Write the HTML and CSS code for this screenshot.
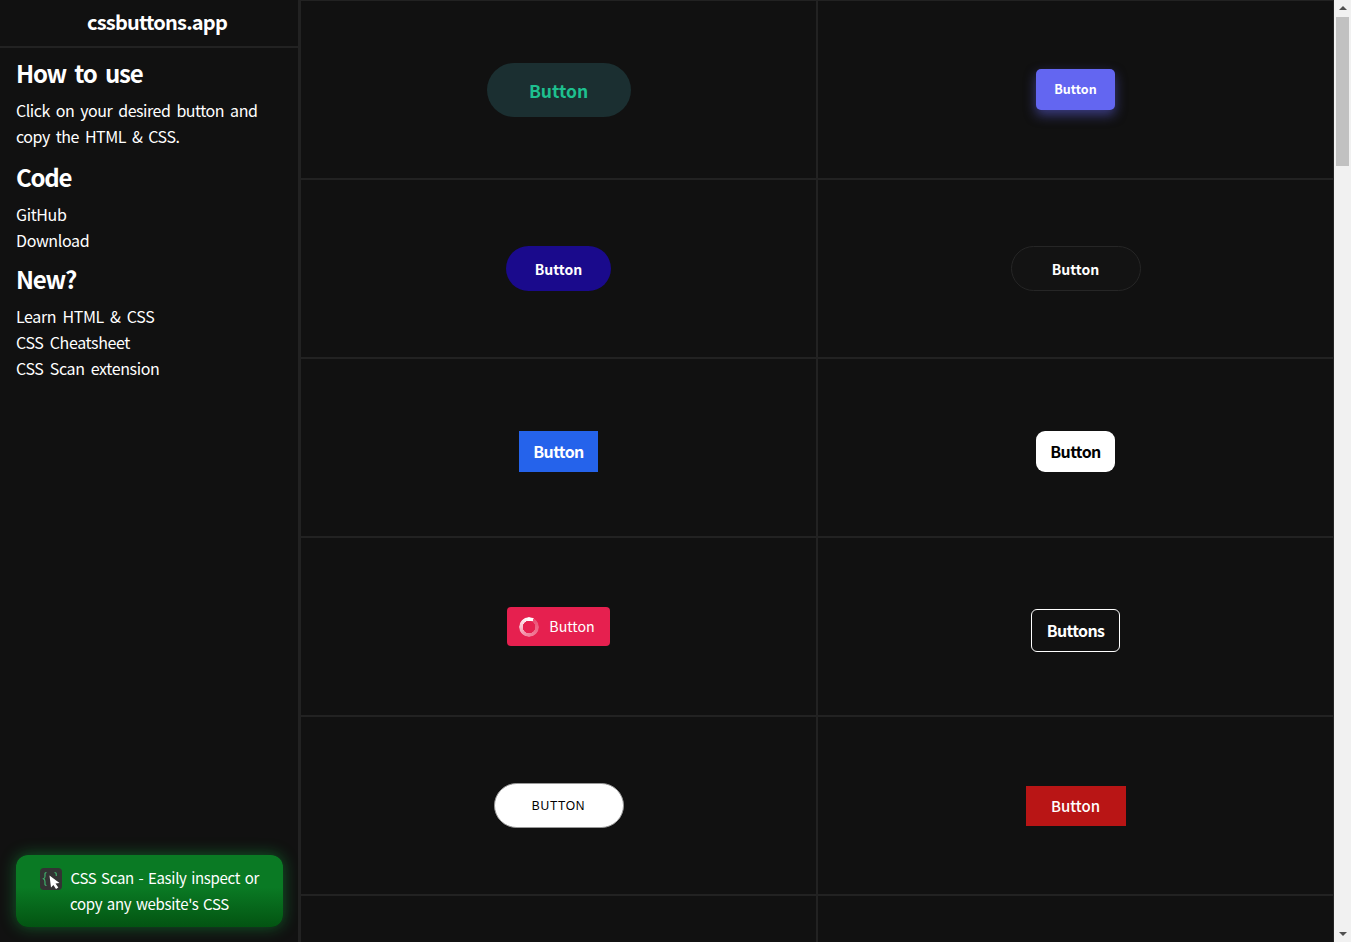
FILE: index.html
```html
<!DOCTYPE html>
<html lang="en">
<head>
<meta charset="utf-8">
<title>cssbuttons.app</title>
<link rel="stylesheet" href="styles.css">
</head>
<body>
<div class="page">
  <aside class="sidebar">
    <header class="brand">cssbuttons.app</header>
    <div class="nav">
      <h2>How to use</h2>
      <p>Click on your desired button and copy the HTML &amp; CSS.</p>
      <h2>Code</h2>
      <ul>
        <li><a href="#">GitHub</a></li>
        <li><a href="#">Download</a></li>
      </ul>
      <h2>New?</h2>
      <ul>
        <li><a href="#">Learn HTML &amp; CSS</a></li>
        <li><a href="#">CSS Cheatsheet</a></li>
        <li><a href="#">CSS Scan extension</a></li>
      </ul>
    </div>
    <a class="promo" href="#">
      <svg class="promo-icon" viewBox="0 0 22 22" width="22" height="22" aria-hidden="true">
        <rect width="22" height="22" rx="4" fill="#333"/>
        <path d="M6.500 4.500C4.500 4.500 5 6 5 8S5 10 3.500 10.800C5 11.500 5 12 5 14s-.5 3.500 1.500 3.500" fill="none" stroke="#3fae6a" stroke-width="1.200"/>
        <path d="M14.500 4.500c2 0 1.800 1.500 1.800 3.500" fill="none" stroke="#3fae6a" stroke-width="1.200"/>
        <path d="M9.500 7.500 19.500 15l-4 .6 2.800 3.900-2.300 1.500-2.600-4L11 19.500Z" fill="#fff"/>
      </svg>
      CSS Scan - Easily inspect or copy any website's CSS
    </a>
  </aside>
  <main class="grid">
    <div class="cell"><button class="btn btn-mint">Button</button></div>
    <div class="cell"><button class="btn btn-indigo">Button</button></div>
    <div class="cell"><button class="btn btn-navy">Button</button></div>
    <div class="cell"><button class="btn btn-ghost">Button</button></div>
    <div class="cell"><button class="btn btn-blue shifted">Button</button></div>
    <div class="cell"><button class="btn btn-white shifted">Button</button></div>
    <div class="cell"><button class="btn btn-rose"><span class="spinner"></span>Button</button></div>
    <div class="cell"><button class="btn btn-outline shifted">Buttons</button></div>
    <div class="cell"><button class="btn btn-caps">BUTTON</button></div>
    <div class="cell"><button class="btn btn-red">Button</button></div>
    <div class="cell"></div>
    <div class="cell"></div>
  </main>
  <div class="scrollbar" aria-hidden="true">
    <span class="arrow arrow-up"></span>
    <span class="thumb"></span>
    <span class="arrow arrow-down"></span>
  </div>
</div>
</body>
</html>
```
FILE: styles.css
```css
* { box-sizing: border-box; }
html, body { margin: 0; height: 100%; overflow: hidden; }
body {
  background: #111;
  color: #fff;
  font-family: "Noto Sans CJK KR", "Noto Sans", sans-serif;
  font-size: 16px;
}
.page { display: flex; height: 942px; }

.sidebar {
  width: 300px;
  flex: none;
  display: flex;
  flex-direction: column;
  border-right: 2px solid #222;
  padding-bottom: 15px;
}
.brand {
  height: 48px;
  border-bottom: 2px solid #222;
  padding: 6px 0 0 16px;
  text-align: center;
  font-size: 20px;
  font-weight: 700;
  line-height: 32px;
  letter-spacing: -0.8px;
}
.nav { flex: 1; padding: 7px 16px 0; }
.nav h2 { margin: 0; font-size: 24px; font-weight: 700; line-height: 36px; letter-spacing: -1.200px; word-spacing: 4px; }
.nav p { margin: 6px 0 10px; line-height: 26px; letter-spacing: -0.46px; word-spacing: 2.800px; }
.nav ul { list-style: none; margin: 6px 0 8px; padding: 0; }
.nav li { line-height: 26px; letter-spacing: -0.37px; word-spacing: 3px; }
.nav a { color: #fff; text-decoration: none; }

.promo {
  display: block;
  margin: 0 15px 0 16px;
  padding: 10px 16px;
  height: 72px;
  border-radius: 12px;
  background: linear-gradient(#0a7a24 45%, #035412);
  box-shadow: 0 0 16px rgba(20, 190, 70, 0.45);
  color: #fff;
  font-size: 15px;
  line-height: 26px;
  letter-spacing: -0.3px;
  text-align: center;
  text-decoration: none;
  word-spacing: 1.500px;
}
.promo-icon { vertical-align: -6px; margin-right: 4px; }

.grid {
  width: 1034px;
  flex: none;
  display: grid;
  grid-template-columns: 517px 517px;
  grid-auto-rows: 179px;
  overflow: hidden;
}
.cell {
  display: flex;
  align-items: center;
  justify-content: center;
  border: 1px solid #222;
}

.btn {
  display: inline-flex;
  align-items: center;
  justify-content: center;
  border: 0;
  padding: 0;
  font-family: inherit;
  color: #fff;
}
.shifted { margin-top: 8px; }
.btn-mint { width: 144px; height: 54px; margin-top: 1px; border-radius: 27px; background: #1b2f31; color: #1ec08f; font-size: 17.500px; font-weight: 700; }
.btn-indigo { width: 79px; height: 41px; padding-bottom: 2px; border-radius: 5px; background: #6366f1; font-size: 12.500px; font-weight: 700; box-shadow: 0 5px 12px rgba(99, 102, 241, 0.5); }
.btn-navy { width: 105px; height: 45px; border-radius: 23px; background: #1a0a8c; font-size: 14px; font-weight: 700; }
.btn-ghost { width: 130px; height: 45px; border-radius: 23px; background: #131313; border: 1px solid #262626; font-size: 14px; font-weight: 700; }
.btn-blue { width: 79px; height: 41px; padding-bottom: 2px; background: #2563eb; font-size: 16px; font-weight: 700; letter-spacing: -0.65px; }
.btn-white { width: 79px; height: 41px; padding-bottom: 2px; border-radius: 9px; background: #fff; color: #000; font-size: 16px; font-weight: 700; letter-spacing: -0.65px; }
.btn-rose { width: 103px; height: 39px; padding: 0 3px 2px 0; border-radius: 4px; background: #e6204f; font-size: 14.200px; }
.btn-outline { width: 89px; height: 43px; padding-bottom: 2px; border-radius: 6px; background: transparent; border: 1px solid #fff; font-size: 16px; font-weight: 700; letter-spacing: -0.65px; }
.btn-caps { width: 130px; height: 45px; border-radius: 23px; background: #fff; border: 1px solid #999; color: #000; font-family: "Liberation Sans", sans-serif; font-size: 12px; letter-spacing: 0.700px; }
.btn-red { width: 100px; height: 40px; margin-top: 1px; padding-bottom: 2px; background: #b91515; font-size: 15px; font-weight: 500; }

.spinner {
  width: 20px;
  height: 20px;
  margin: 2px 10px 0 0;
  border-radius: 50%;
  background: conic-gradient(from 30deg, rgba(255,255,255,0.2), rgba(255,255,255,0.5) 50%, #fff 90%, #fff);
  -webkit-mask: radial-gradient(circle, transparent 6px, #000 6.500px);
  mask: radial-gradient(circle, transparent 6px, #000 6.500px);
}

.scrollbar {
  width: 17px;
  flex: none;
  background: #f1f1f1;
  display: flex;
  flex-direction: column;
  align-items: center;
  position: relative;
}
.arrow { width: 0; height: 0; border-left: 4px solid transparent; border-right: 4px solid transparent; }
.arrow-up { margin-top: 6px; border-bottom: 4px solid #505050; }
.thumb { width: 13px; height: 149px; margin-top: 7px; background: #c1c1c1; }
.arrow-down { margin-top: auto; margin-bottom: 6px; border-top: 4px solid #505050; }
```
